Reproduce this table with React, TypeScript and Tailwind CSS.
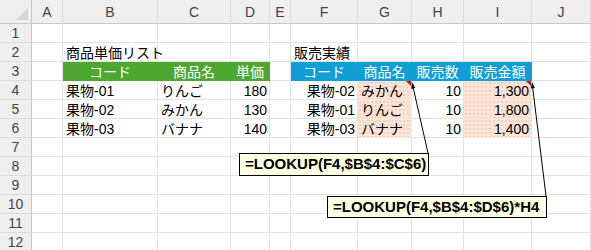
import React from "react";

type Kind = "plain" | "green" | "blue" | "pink";
type Align = "l" | "c" | "r";
type Cell = { t?: string; k?: Kind; a?: Align };

const COLS = ["A", "B", "C", "D", "E", "F", "G", "H", "I", "J"];

const E: Cell = {};

const rows: Cell[][] = [
  [E, E, E, E, E, E, E, E, E, E],
  [E, { t: "商品単価リスト" }, E, E, E, { t: "販売実績" }, E, E, E, E],
  [
    E,
    { t: "コード", k: "green", a: "c" },
    { t: "商品名", k: "green", a: "c" },
    { t: "単価", k: "green", a: "c" },
    E,
    { t: "コード", k: "blue", a: "c" },
    { t: "商品名", k: "blue", a: "c" },
    { t: "販売数", k: "blue", a: "c" },
    { t: "販売金額", k: "blue", a: "c" },
    E,
  ],
  [
    E,
    { t: "果物-01" },
    { t: "りんご" },
    { t: "180", a: "r" },
    E,
    { t: "果物-02", a: "r" },
    { t: "みかん", k: "pink" },
    { t: "10", a: "r" },
    { t: "1,300", k: "pink", a: "r" },
    E,
  ],
  [
    E,
    { t: "果物-02" },
    { t: "みかん" },
    { t: "130", a: "r" },
    E,
    { t: "果物-01", a: "r" },
    { t: "りんご", k: "pink" },
    { t: "10", a: "r" },
    { t: "1,800", k: "pink", a: "r" },
    E,
  ],
  [
    E,
    { t: "果物-03" },
    { t: "バナナ" },
    { t: "140", a: "r" },
    E,
    { t: "果物-03", a: "r" },
    { t: "バナナ", k: "pink" },
    { t: "10", a: "r" },
    { t: "1,400", k: "pink", a: "r" },
    E,
  ],
  [E, E, E, E, E, E, E, E, E, E],
  [E, E, E, E, E, E, E, E, E, E],
  [E, E, E, E, E, E, E, E, E, E],
  [E, E, E, E, E, E, E, E, E, E],
  [E, E, E, E, E, E, E, E, E, E],
  [E, E, E, E, E, E, E, E, E, E],
];

const kindCls: Record<Kind, string> = {
  plain: "bg-white border-[#e1e1e1] text-black",
  green: "bg-[#4ea72e] border-[#4ea72e] text-white",
  blue: "bg-[#0f9ed5] border-[#0f9ed5] text-white",
  pink: "bg-[#fce6da] border-[#fce6da] text-black bg-[radial-gradient(#f4c3ac_0.6px,transparent_0.9px)] bg-[length:4px_4px]",
};

const alignCls: Record<Align, string> = {
  l: "justify-start pl-[3px]",
  c: "justify-center",
  r: "justify-end pr-[2px]",
};

export default function App() {
  return (
    <div className="relative w-[591px] h-[250px] overflow-hidden bg-white font-['Liberation_Sans','Noto_Sans_CJK_JP',sans-serif] text-[14px]">
      <div className="grid grid-cols-[32px_31px_95px_73px_39px_21px_67px_54px_52px_68px_59px] grid-rows-[24px_repeat(12,19px)]">
        {/* corner */}
        <div className="relative bg-[#efefef] border-r border-b border-[#c8c8c8]">
          <svg className="absolute right-[3px] bottom-[3px]" width="12" height="12" viewBox="0 0 12 12">
            <polygon points="12,0 12,12 0,12" fill="#d6d6d6" />
          </svg>
        </div>
        {COLS.map((c) => (
          <div
            key={c}
            className="flex items-center justify-center bg-[#efefef] border-r border-b border-r-[#dcdcdc] border-b-[#c8c8c8] text-[#444] text-[14px] pt-[1px]"
          >
            {c}
          </div>
        ))}
        {rows.map((row, ri) => (
          <React.Fragment key={ri}>
            <div className="flex items-center justify-center bg-[#efefef] border-r border-b border-r-[#c8c8c8] border-b-[#dcdcdc] text-[#444] text-[14px] pt-[1px]">
              {ri + 1}
            </div>
            {row.map((cell, ci) => (
              <div
                key={ci}
                className={`flex items-center whitespace-nowrap overflow-visible border-r border-b pt-[2px] leading-[17px] ${kindCls[cell.k ?? "plain"]} ${alignCls[cell.a ?? "l"]}`}
              >
                {cell.t ? <span className="relative z-10">{cell.t}</span> : null}
              </div>
            ))}
          </React.Fragment>
        ))}
      </div>

      <svg className="absolute left-0 top-0 pointer-events-none" width="591" height="250" viewBox="0 0 591 250">
        <polygon points="406,81 411,81 411,86" fill="#e00000" />
        <polygon points="526,81 531,81 531,86" fill="#e00000" />
        <line x1="428" y1="153" x2="412.8" y2="86" stroke="#000" strokeWidth="1" />
        <polygon points="412,82 415.3,88 411.2,88.9" fill="#000" />
        <line x1="546" y1="196" x2="532.6" y2="87" stroke="#000" strokeWidth="1" />
        <polygon points="532,82 534.8,88 530.8,88.5" fill="#000" />
      </svg>

      <div className="absolute left-[239px] top-[153px] w-[190px] h-[23px] bg-[#ffffe1] border border-black flex items-center pl-[5px] font-bold text-[15px] text-black whitespace-nowrap">
        =LOOKUP(F4,$B$4:$C$6)
      </div>
      <div className="absolute left-[327px] top-[196px] w-[220px] h-[22px] bg-[#ffffe1] border border-black flex items-center pl-[5px] font-bold text-[15px] text-black whitespace-nowrap">
        =LOOKUP(F4,$B$4:$D$6)*H4
      </div>
    </div>
  );
}
